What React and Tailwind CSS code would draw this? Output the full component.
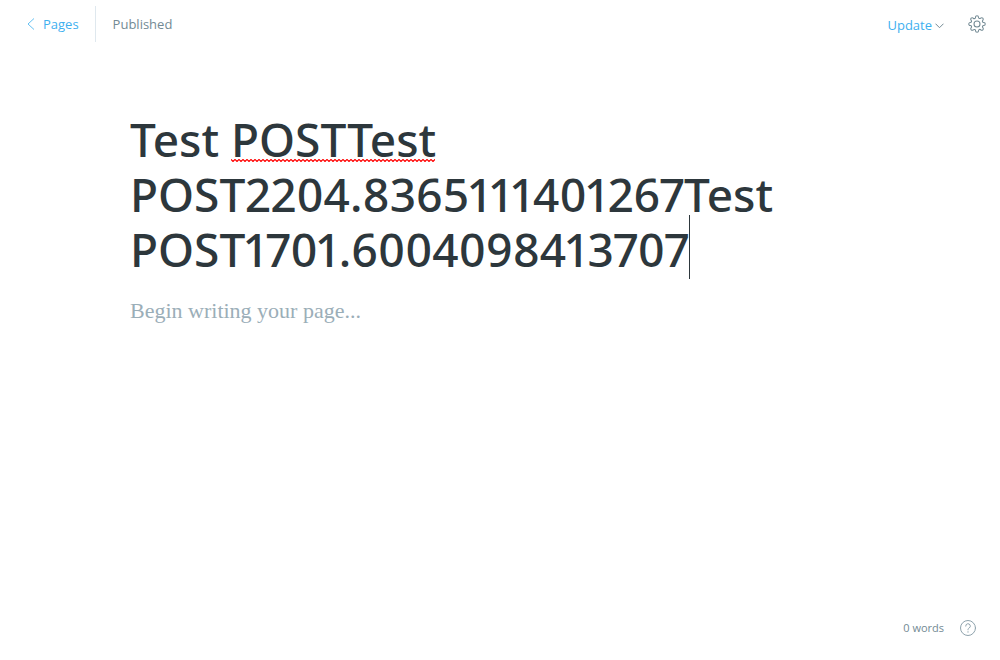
import { useState } from "react";

function GearIcon() {
  return (
    <svg viewBox="0 0 24 24" className="size-[18px]" fill="none" stroke="currentColor" strokeWidth="1.4" aria-hidden="true">
      <circle cx="12" cy="12" r="4" />
      <path d="M19.4 15a1.65 1.65 0 0 0 .33 1.82l.06.06a2 2 0 0 1 0 2.83 2 2 0 0 1-2.83 0l-.06-.06a1.65 1.65 0 0 0-1.82-.33 1.65 1.65 0 0 0-1 1.51V21a2 2 0 0 1-2 2 2 2 0 0 1-2-2v-.09A1.65 1.65 0 0 0 9 19.4a1.65 1.65 0 0 0-1.82.33l-.06.06a2 2 0 0 1-2.83 0 2 2 0 0 1 0-2.83l.06-.06a1.65 1.65 0 0 0 .33-1.82 1.65 1.65 0 0 0-1.51-1H3a2 2 0 0 1-2-2 2 2 0 0 1 2-2h.09A1.65 1.65 0 0 0 4.6 9a1.65 1.65 0 0 0-.33-1.82l-.06-.06a2 2 0 0 1 0-2.83 2 2 0 0 1 2.83 0l.06.06a1.65 1.65 0 0 0 1.82.33H9a1.65 1.65 0 0 0 1-1.51V3a2 2 0 0 1 2-2 2 2 0 0 1 2 2v.09a1.65 1.65 0 0 0 1 1.51 1.65 1.65 0 0 0 1.82-.33l.06-.06a2 2 0 0 1 2.83 0 2 2 0 0 1 0 2.83l-.06.06a1.65 1.65 0 0 0-.33 1.82V9a1.65 1.65 0 0 0 1.51 1H21a2 2 0 0 1 2 2 2 2 0 0 1-2 2h-.09a1.65 1.65 0 0 0-1.51 1z" />
    </svg>
  );
}

function HelpIcon() {
  return (
    <svg viewBox="0 0 16 16" className="size-4" fill="none" stroke="currentColor" strokeLinecap="round" aria-hidden="true">
      <circle cx="8" cy="8" r="7.5" />
      <path d="M5.7 6.1a2.3 2.3 0 1 1 3.5 1.9c-.9.5-1.2.9-1.2 1.8" />
      <circle cx="8" cy="11.9" r="0.7" fill="currentColor" stroke="none" />
    </svg>
  );
}

function Header() {
  return (
    <header className="flex h-12 items-center justify-between pl-[26px] pr-[14px] text-[13px]">
      <div className="flex items-center">
        <a href="#pages" className="flex items-center gap-2 pr-4 text-[#3eb0ef]">
          <svg viewBox="0 0 9 12" className="h-3 w-[9px]" fill="none" stroke="currentColor" strokeWidth="0.8" aria-hidden="true">
            <path d="M8 .5 2 6l6 5.5" />
          </svg>
          <span className="pt-px">Pages</span>
        </a>
        <span className="h-9 w-px bg-[#dfe8ee]" />
        <span className="pt-px pl-[17px]">Published</span>
      </div>
      <div className="flex items-center gap-6">
        <button type="button" className="flex items-center gap-[3px] pt-[3px] text-[#3eb0ef]">
          Update
          <svg viewBox="0 0 9 6" className="h-[6px] w-[9px] text-[#738a94]" fill="none" stroke="currentColor" aria-hidden="true">
            <path d="m.5.7 4 4 4-4" />
          </svg>
        </button>
        <button type="button" aria-label="Page settings">
          <GearIcon />
        </button>
      </div>
    </header>
  );
}

function TitleField() {
  const [title, setTitle] = useState("Test POSTTest POST2204.8365111401267Test POST1701.6004098413707");
  return (
    <div className="relative">
      <textarea
        aria-label="Page title"
        rows={3}
        spellCheck={false}
        value={title}
        onChange={(e) => setTitle(e.target.value)}
        className="block w-full resize-none overflow-hidden font-['Noto_Sans',sans-serif] text-[46px] leading-[55px] font-medium text-[#2d373c] proportional-nums caret-transparent outline-none"
      />
      <svg className="pointer-events-none absolute top-[47px] left-[101px] h-[3px] w-[204px]" aria-hidden="true">
        <defs>
          <pattern id="squiggle" width="4" height="3" patternUnits="userSpaceOnUse">
            <path d="M-1 -.5 2 2.5 5 -.5" fill="none" stroke="#f00" strokeWidth="1.2" />
          </pattern>
        </defs>
        <rect width="100%" height="3" fill="url(#squiggle)" />
      </svg>
      <span className="pointer-events-none absolute top-[103px] left-[559px] h-16 w-px bg-[#2d373c]" />
    </div>
  );
}

export default function App() {
  return (
    <div className="flex min-h-screen flex-col bg-white font-['Open_Sans',sans-serif] text-[#738a94]">
      <Header />
      <main className="mx-auto flex w-full max-w-[740px] grow flex-col gap-5 pt-16">
        <TitleField />
        <textarea
          aria-label="Page content"
          placeholder="Begin writing your page..."
          className="w-full grow resize-none font-['Liberation_Serif',serif] text-[22px] leading-7 outline-none placeholder:text-[#9baeb8]"
        />
      </main>
      <footer className="flex h-16 items-center justify-end gap-4 pr-6 text-[11px]">
        <span>0 words</span>
        <button type="button" aria-label="Help" className="text-[#8fa3ad]">
          <HelpIcon />
        </button>
      </footer>
    </div>
  );
}
